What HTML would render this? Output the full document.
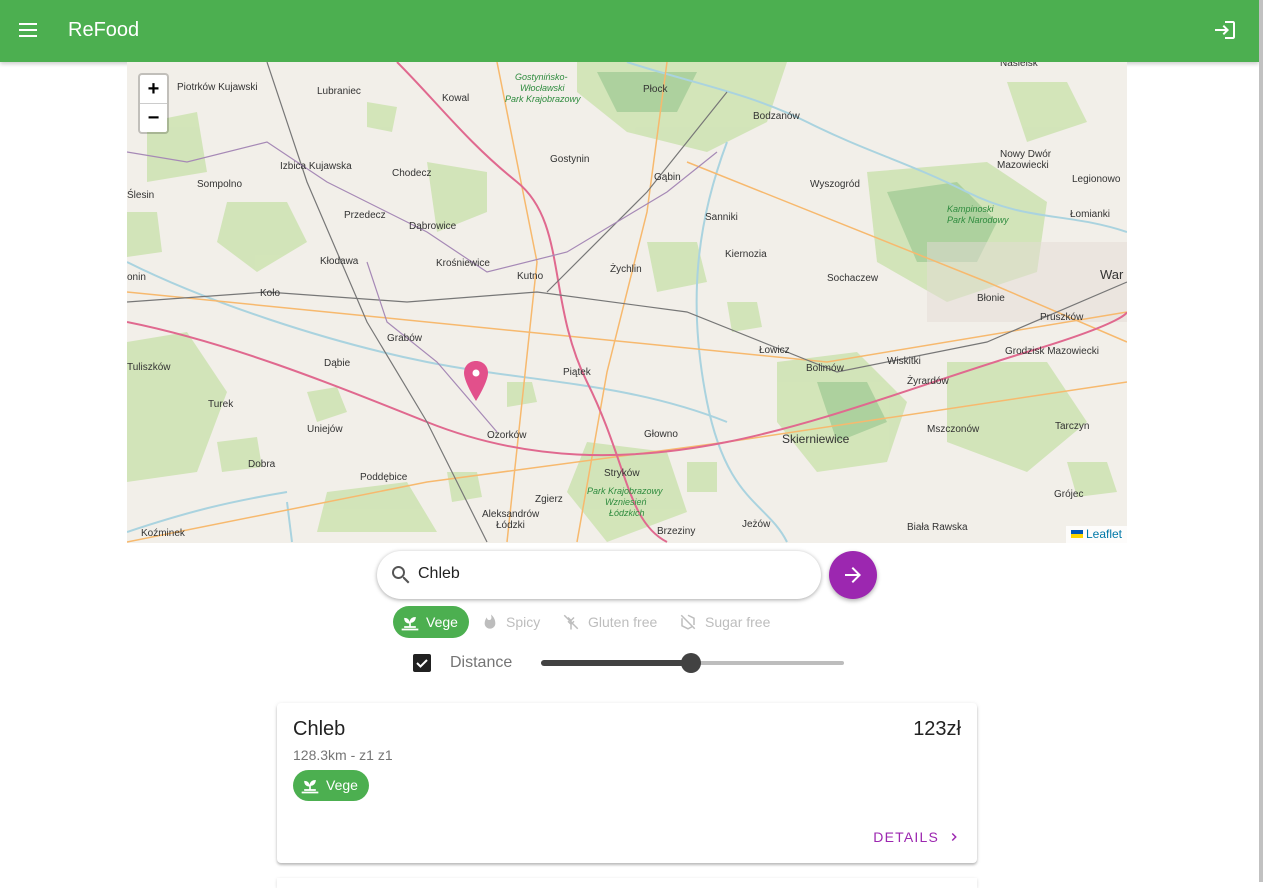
<!DOCTYPE html>
<html><head><meta charset="utf-8"><style>
*{box-sizing:border-box;margin:0;padding:0}
body{width:1263px;height:882px;overflow:hidden;background:#fff;font-family:"Liberation Sans",Roboto,sans-serif;position:relative}
.hdr{position:absolute;left:0;top:0;width:1259px;height:62px;background:#4caf50;box-shadow:0 2px 4px rgba(0,0,0,.2)}
.sb{position:absolute;right:0;top:0;width:4px;height:882px;background:#c1c1c1}
.map{position:absolute;left:127px;top:62px;width:1000px;height:481px;background:#f2efe9;overflow:hidden}
.zoom{position:absolute;left:11px;top:11px;width:31px;height:61px;background:#fff;border:2px solid rgba(0,0,0,.2);border-radius:4px;background-clip:padding-box}
.zoom div{height:29px;text-align:center;font:bold 20px "Liberation Sans";line-height:28px;color:#000}
.zoom div:first-child{border-bottom:1px solid #ccc}
.attr{position:absolute;right:0;bottom:0;background:rgba(255,255,255,.8);font-size:12px;color:#0078a8;padding:1px 5px;height:17px}
.search{position:absolute;left:377px;top:551px;width:444px;height:48px;border-radius:24px;background:#fff;box-shadow:0 1px 4px rgba(0,0,0,.35)}
.search span{position:absolute;left:41px;top:14px;font-size:16px;color:#222}
.go{position:absolute;left:829px;top:551px;width:48px;height:48px;border-radius:50%;background:#9c27b0;box-shadow:0 2px 4px rgba(0,0,0,.3)}
.chip{position:absolute;top:606px;height:32px;font-size:14px;color:#bdbdbd;line-height:32px}
.card{position:absolute;left:277px;top:703px;width:700px;height:160px;background:#fff;border-radius:4px;box-shadow:0 2px 2px rgba(0,0,0,.2),0 1px 5px rgba(0,0,0,.12)}
</style></head><body>
<div class="hdr">
<svg style="position:absolute;left:18px;top:20px" width="20" height="20" viewBox="0 0 20 20"><path d="M1 4h18M1 10h18M1 16h18" stroke="#fff" stroke-width="2"/></svg>
<div style="position:absolute;left:68px;top:19px;color:#fff;font-size:20px">ReFood</div>
<svg style="position:absolute;left:1213px;top:18px" width="24" height="24" viewBox="0 0 24 24"><path fill="#fff" d="M11 7L9.6 8.4l2.6 2.6H2v2h10.2l-2.6 2.6L11 17l5-5-5-5zm9 12h-8v2h8c1.1 0 2-.9 2-2V5c0-1.1-.9-2-2-2h-8v2h8v14z"/></svg>
</div>
<div class="sb"></div>
<div class="map">
<svg width="1000" height="481" viewBox="0 0 1000 481" style="position:absolute;left:0;top:0">
<g fill="#cfe3b4" opacity=".9">
<path d="M450 0h210l-20 60-60 30-80-20-50-40z"/>
<path d="M740 110l120-10 60 40-10 70-90 30-70-40z"/>
<path d="M650 300l80-10 50 50-20 60-70 10-40-50z"/>
<path d="M0 280l60-10 40 60-30 80-70 10z"/>
<path d="M100 140l60 0 20 40-50 30-40-30z"/>
<path d="M300 100l60 10 0 40-50 20z"/>
<path d="M460 380l80 10 20 60-80 30-40-50z"/>
<path d="M820 300l100 0 40 60-60 50-80-30z"/>
<path d="M200 430l80-10 30 50h-120z"/>
<path d="M880 20l60 0 20 40-60 20z"/>
<path d="M520 180l50 0 10 40-50 10z"/>
<path d="M20 60l50-10 10 60-60 10z"/>
<path d="M180 330l30-5 10 25-30 10z"/><path d="M380 320l25 0 5 20-30 5z"/><path d="M600 240l30 0 5 25-30 5z"/><path d="M240 40l30 5-5 25-25-5z"/><path d="M940 400l40 0 10 30-40 5z"/><path d="M90 380l40-5 5 30-40 5z"/><path d="M560 400l30 0 0 30-30 0z"/><path d="M320 410l30 0 5 25-30 5z"/><path d="M0 150l30 0 5 40-35 5z"/>
</g>
<g fill="#add19e"><path d="M760 130l70-10 40 40-20 40-60 0z"/><path d="M470 10l100 0-20 40-60 0z"/><path d="M690 320l50 0 20 40-50 20z"/></g>
<rect x="800" y="180" width="200" height="80" fill="#e3dcd6" opacity=".5"/>
<g fill="none" stroke="#aad3df" stroke-width="2">
<path d="M500 0c60 20 120 30 180 60s100 40 160 70 100 20 160 40"/>
<path d="M0 470c60-20 100-30 160-40"/><path d="M160 440l5 40"/>
<path d="M0 200c80 40 200 80 300 100s200 20 300 60"/>
<path d="M600 80c-30 80-40 160-20 260s60 100 80 140"/>
</g>
<g fill="none" stroke="#f7b96e" stroke-width="1.5">
<path d="M0 230l200 20 200 20 300 30 300-50"/><path d="M540 0l-20 150-40 160-30 170"/><path d="M370 0l40 200-30 280"/><path d="M560 100l300 120 140 60"/><path d="M0 480l300-60 300-40 400-60"/>
</g>
<g fill="none" stroke="#e0698f" stroke-width="2">
<path d="M270 0c40 40 70 80 120 120s30 120 70 200 40 140 80 160"/>
<path d="M0 260c100 20 200 60 300 100s200 40 300 20 200-60 300-90 100-40 100-40"/>
</g>
<g fill="none" stroke="#777" stroke-width="1.2">
<path d="M140 0l40 120 60 140 60 100 60 120"/><path d="M0 240l140-10 140 10 130-10 150 20 150 60 150-30 140-60"/><path d="M600 30l-80 100-100 100"/>
</g>
<g fill="none" stroke="#a689b6" stroke-width="1.2"><path d="M0 90l60 10 80-20 60 40 100 50 60 40 80-20 100-60 50-40"/><path d="M240 200l20 60 50 40 60 70"/></g>
<g font-family="Liberation Sans" font-size="10" fill="#333">
<text x="50" y="28">Piotrków Kujawski</text><text x="190" y="32">Lubraniec</text><text x="315" y="39">Kowal</text><text x="516" y="30">Płock</text><text x="626" y="57">Bodzanów</text><text x="873" y="4">Nasielsk</text>
<text x="153" y="107">Izbica Kujawska</text><text x="265" y="114">Chodecz</text><text x="423" y="100">Gostynin</text><text x="873" y="95">Nowy Dwór</text><text x="870" y="106">Mazowiecki</text>
<text x="70" y="125">Sompolno</text><text x="527" y="118">Gąbin</text><text x="683" y="125">Wyszogród</text><text x="945" y="120">Legionowo</text>
<text x="0" y="136">Ślesin</text><text x="217" y="156">Przedecz</text><text x="282" y="167">Dąbrowice</text><text x="578" y="158">Sanniki</text><text x="943" y="155">Łomianki</text>
<text x="193" y="202">Kłodawa</text><text x="309" y="204">Krośniewice</text><text x="598" y="195">Kiernozia</text><text x="483" y="210">Żychlin</text>
<text x="390" y="217">Kutno</text><text x="700" y="219">Sochaczew</text><text x="973" y="217" font-size="13">War</text><text x="0" y="218">onin</text>
<text x="133" y="234">Koło</text><text x="850" y="239">Błonie</text><text x="260" y="279">Grabów</text><text x="632" y="291">Łowicz</text><text x="878" y="292">Grodzisk Mazowiecki</text><text x="913" y="258">Pruszków</text>
<text x="197" y="304">Dąbie</text><text x="760" y="302">Wiskitki</text><text x="436" y="313">Piątek</text><text x="679" y="309">Bolimów</text><text x="0" y="308">Tuliszków</text><text x="780" y="322">Żyrardów</text>
<text x="81" y="345">Turek</text><text x="360" y="376">Ozorków</text><text x="180" y="370">Uniejów</text><text x="517" y="375">Głowno</text><text x="655" y="381" font-size="12">Skierniewice</text><text x="800" y="370">Mszczonów</text><text x="928" y="367">Tarczyn</text>
<text x="121" y="405">Dobra</text><text x="233" y="418">Poddębice</text><text x="477" y="414">Stryków</text><text x="408" y="440">Zgierz</text><text x="355" y="455">Aleksandrów</text><text x="369" y="466">Łódzki</text><text x="927" y="435">Grójec</text>
<text x="530" y="472">Brzeziny</text><text x="615" y="465">Jeżów</text><text x="780" y="468">Biała Rawska</text><text x="14" y="474">Koźminek</text>
</g>
<g font-family="Liberation Sans" font-size="9" font-style="italic" fill="#2e8b3e">
<text x="388" y="18">Gostynińsko-</text><text x="393" y="29">Włocławski</text><text x="378" y="40">Park Krajobrazowy</text>
<text x="820" y="150">Kampinoski</text><text x="820" y="161">Park Narodowy</text>
<text x="460" y="432">Park Krajobrazowy</text><text x="478" y="443">Wzniesień</text><text x="482" y="454">Łódzkich</text>
</g>
<path d="M349 299c-7 0-12 5-12 12 0 9 12 28 12 28s12-19 12-28c0-7-5-12-12-12z" fill="#e2508b"/><circle cx="349" cy="311" r="3.5" fill="#fff"/>
</svg>
<div class="zoom"><div>+</div><div>−</div></div>
<div class="attr"><span style="display:inline-block;width:12px;height:8px;background:linear-gradient(#0057b7 50%,#ffd700 50%);margin-right:3px"></span>Leaflet</div>
</div>
<div class="search">
<svg style="position:absolute;left:12px;top:12px" width="24" height="24" viewBox="0 0 24 24"><path fill="#555" d="M15.5 14h-.79l-.28-.27A6.47 6.47 0 0016 9.5 6.5 6.5 0 109.5 16c1.61 0 3.09-.59 4.23-1.57l.27.28v.79l5 4.99L20.49 19l-4.99-5zm-6 0C7.01 14 5 11.99 5 9.5S7.01 5 9.5 5 14 7.01 14 9.5 11.99 14 9.5 14z"/></svg>
<span>Chleb</span></div>
<div class="go"><svg style="position:absolute;left:12px;top:12px" width="24" height="24" viewBox="0 0 24 24"><path fill="#fff" d="M12 4l-1.41 1.41L16.17 11H4v2h12.17l-5.58 5.59L12 20l8-8z"/></svg></div>
<div class="chip" style="left:393px;width:76px;background:#4caf50;border-radius:16px;color:#fff;padding-left:33px">Vege
<svg style="position:absolute;left:7px;top:6px" width="20" height="20" viewBox="0 0 24 24"><path fill="#fff" d="M2 20h20v2H2zM11 17v-3.2C7 13.5 5 11 5 7c4 0 6 2 6.5 5 .5-4 3-6 7.5-6 0 4-2.5 6.8-6 7v4h6v2H5v-2z"/></svg></div>
<div class="chip" style="left:482px;padding-left:24px">Spicy<svg style="position:absolute;left:0;top:8px" width="16" height="16" viewBox="0 0 24 24"><path fill="#bdbdbd" d="M13.5.7s.7 2.6.7 4.7c0 2-1.3 3.6-3.3 3.6s-3.5-1.6-3.5-3.6V5C5.4 7.4 4 10.5 4 14c0 4.4 3.6 8 8 8s8-3.6 8-8C20 8.6 17.4 3.8 13.5.7z"/></svg></div>
<div class="chip" style="left:562px;padding-left:26px">Gluten free<svg style="position:absolute;left:0;top:7px" width="18" height="18" viewBox="0 0 24 24"><path stroke="#bdbdbd" stroke-width="2" fill="none" d="M3 3l18 18M12 22V9M8 6l4 4 4-4M8 11l4 4 4-4"/></svg></div>
<div class="chip" style="left:679px;padding-left:26px">Sugar free<svg style="position:absolute;left:0;top:7px" width="18" height="18" viewBox="0 0 24 24"><path stroke="#bdbdbd" stroke-width="2" fill="none" d="M3 3l18 18M12 3l8 4v9M4 7v10l8 4 5-2.5"/></svg></div>
<div style="position:absolute;left:413px;top:654px;width:18px;height:18px;background:#212121;border-radius:2px"><svg width="18" height="18" viewBox="0 0 18 18"><path d="M4 9l3.5 3.5L14 6" stroke="#fff" stroke-width="2" fill="none"/></svg></div>
<div style="position:absolute;left:450px;top:654px;font-size:16px;color:#757575">Distance</div>
<div style="position:absolute;left:541px;top:661px;width:303px;height:4px;border-radius:2px;background:#bdbdbd"></div>
<div style="position:absolute;left:541px;top:660px;width:150px;height:6px;border-radius:3px;background:#424242"></div>
<div style="position:absolute;left:681px;top:653px;width:20px;height:20px;border-radius:50%;background:#424242"></div>
<div class="card">
<div style="position:absolute;left:16px;top:15px;font-size:20px;color:#222">Chleb</div>
<div style="position:absolute;right:16px;top:15px;font-size:20px;color:#222">123zł</div>
<div style="position:absolute;left:16px;top:44px;font-size:14px;color:#757575">128.3km - z1 z1</div>
<div style="position:absolute;left:16px;top:67px;width:76px;height:31px;border-radius:16px;background:#4caf50;color:#fff;font-size:14px;line-height:31px;padding-left:33px">Vege<svg style="position:absolute;left:7px;top:5px" width="20" height="20" viewBox="0 0 24 24"><path fill="#fff" d="M2 20h20v2H2zM11 17v-3.2C7 13.5 5 11 5 7c4 0 6 2 6.5 5 .5-4 3-6 7.5-6 0 4-2.5 6.8-6 7v4h6v2H5v-2z"/></svg></div>
<div style="position:absolute;right:38px;top:126px;font-size:14px;color:#9c27b0;letter-spacing:1.2px">DETAILS</div>
<svg style="position:absolute;right:16px;top:127px" width="14" height="14" viewBox="0 0 24 24"><path d="M9 6l6 6-6 6" stroke="#9c27b0" stroke-width="2.5" fill="none"/></svg>
</div>
<div style="position:absolute;left:277px;top:878px;width:700px;height:10px;background:#fff;box-shadow:0 1px 3px rgba(0,0,0,.15)"></div>
</body></html>
